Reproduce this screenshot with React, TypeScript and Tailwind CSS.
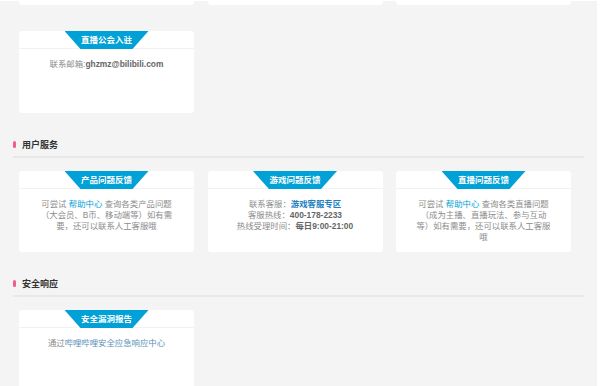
import type { ReactNode } from 'react'

const font = { fontFamily: '"Liberation Sans", "Noto Sans CJK SC", sans-serif' }

function Card({ title, children, h = 'h-[82px]' }: { title: string; children?: ReactNode; h?: string }) {
  return (
    <div className={`w-[175px] ${h} rounded-[3px] bg-white`}>
      <div className="flex h-[18px] justify-center border-b border-[#f2f2f2]">
        <div className="flex h-[18px] w-[84px] items-center justify-center bg-[#00a1d6] text-[8.5px] font-bold text-white [clip-path:polygon(0_0,100%_0,81%_100%,19%_100%)]">
          {title}
        </div>
      </div>
      <div className="pt-[10px] text-center text-[8.4px] leading-[11px] text-[#8c8c8c]">{children}</div>
    </div>
  )
}

function SectionTitle({ label }: { label: string }) {
  return (
    <div className="mt-[27px]">
      <div className="flex h-[12px] items-center gap-[6px]">
        <span className="mb-[3px] h-[7px] w-[3px] rounded-[2px] bg-[#f25d8e]" />
        <span className="text-[9px] font-bold text-[#333]">{label}</span>
      </div>
      <div className="mt-[4px] h-[2px] w-[571px] bg-[#e8e8e8]" />
    </div>
  )
}

const Help = () => <span className="text-[#00a1d6]">帮助中心</span>

export default function App() {
  return (
    <div className="h-[386px] w-[600px] overflow-hidden bg-white" style={font}>
      <div className="h-[386px] w-[597px] border-t border-white bg-[#f4f4f4] pl-[13px]">
        {/* previous row, cut off at top */}
        <div className="flex gap-[13.5px] pl-[6px]">
          <div className="h-[4px] w-[175px] rounded-b-[3px] bg-white" />
          <div className="h-[4px] w-[175px] rounded-b-[3px] bg-white" />
          <div className="h-[4px] w-[175px] rounded-b-[3px] bg-white" />
        </div>
        <div className="mt-[26px] flex gap-[13.5px] pl-[6px]">
          <Card title="直播公会入驻">
            联系邮箱:<span className="font-bold text-[#666]">ghzmz@bilibili.com</span>
          </Card>
        </div>

        <SectionTitle label="用户服务" />
        <div className="mt-[13px] flex gap-[13.5px] pl-[6px]">
          <Card title="产品问题反馈" h="h-[81px]">
            <p className="whitespace-nowrap">可尝试 <Help /> 查询各类产品问题</p>
            <p className="whitespace-nowrap">（大会员、B币、移动端等）如有需</p>
            <p className="whitespace-nowrap">要，还可以联系人工客服哦</p>
          </Card>
          <Card title="游戏问题反馈" h="h-[81px]">
            <p className="whitespace-nowrap">
              联系客服：<span className="font-bold text-[#1f7fbf]">游戏客服专区</span>
            </p>
            <p className="whitespace-nowrap">
              客服热线：<span className="font-bold text-[#666]">400-178-2233</span>
            </p>
            <p className="whitespace-nowrap">
              热线受理时间：<span className="font-bold text-[#666]">每日9:00-21:00</span>
            </p>
          </Card>
          <Card title="直播问题反馈" h="h-[81px]">
            <p className="whitespace-nowrap">可尝试 <Help /> 查询各类直播问题</p>
            <p className="whitespace-nowrap">（成为主播、直播玩法、参与互动</p>
            <p className="whitespace-nowrap">等）如有需要，还可以联系人工客服</p>
            <p className="whitespace-nowrap">哦</p>
          </Card>
        </div>

        <SectionTitle label="安全响应" />
        <div className="mt-[13px] flex gap-[13.5px] pl-[6px]">
          <Card title="安全漏洞报告">
            通过<span className="text-[#5a8fb8]">哔哩哔哩安全应急响应中心</span>
          </Card>
        </div>
      </div>
    </div>
  )
}
